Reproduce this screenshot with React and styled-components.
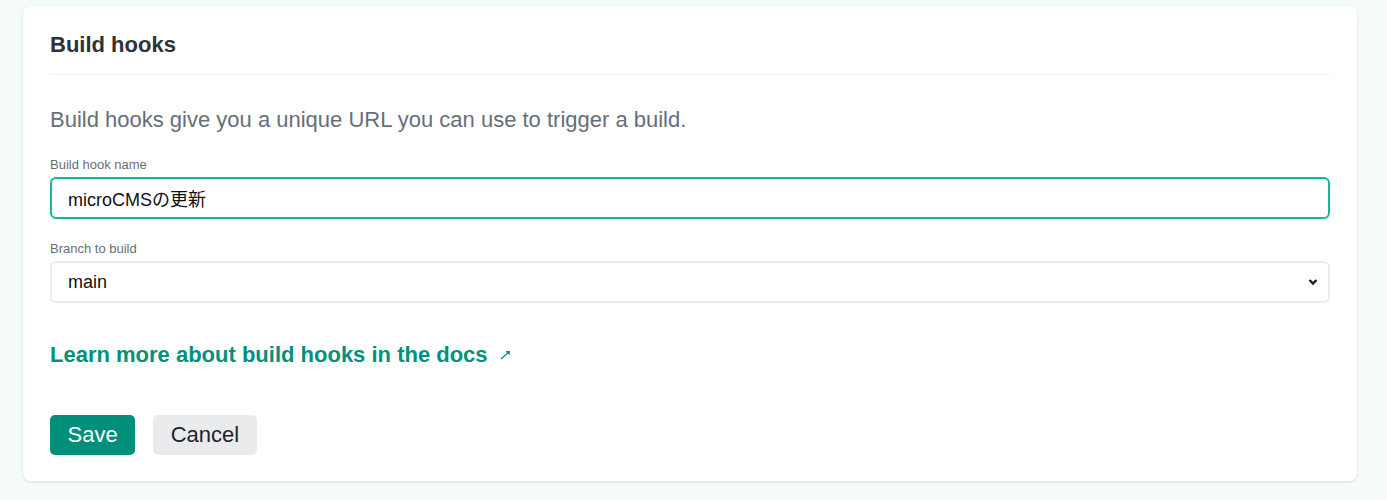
import React from "react";
import styled, { createGlobalStyle } from "styled-components";

const GlobalStyle = createGlobalStyle`
  body {
    margin: 0;
    background: #f4fbfa;
    font-family: "Liberation Sans", Arial, "Noto Sans CJK JP", sans-serif;
  }
`;

const Page = styled.div`
  padding: 6px 30px 19px 23px;
`;

const Card = styled.section`
  background: #fff;
  border-radius: 8px;
  box-shadow: 0 1px 3px rgba(0, 0, 0, 0.12);
  padding: 25px 27px 26px;
`;

const Title = styled.h2`
  margin: 0;
  font-size: 22px;
  line-height: 28px;
  font-weight: 700;
  color: #2d3339;
  padding-bottom: 15px;
  border-bottom: 1px solid #f1f3f4;
`;

const Lead = styled.p`
  margin: 31px 0 23px;
  font-size: 22px;
  line-height: 28px;
  color: #656f78;
`;

const Field = styled.div`
  margin-bottom: 22px;
`;

const Label = styled.label`
  display: block;
  font-size: 13px;
  line-height: 16px;
  color: #666f77;
  margin-bottom: 4px;
`;

const TextInput = styled.input`
  box-sizing: border-box;
  width: 100%;
  height: 42px;
  padding: 0 16px;
  font-family: inherit;
  font-size: 18px;
  color: #111;
  border: 2px solid ${(p) => (p.$focused ? "#17b59c" : "#ebeced")};
  border-radius: 6px;
  outline: none;
  background: #fff;
`;

const SelectWrap = styled.div`
  position: relative;
`;

const Select = styled.select`
  box-sizing: border-box;
  width: 100%;
  height: 42px;
  padding: 0 16px;
  font-family: inherit;
  font-size: 18px;
  color: #111;
  border: 2px solid #ebeced;
  border-radius: 6px;
  background: #fff;
  appearance: none;
  outline: none;
`;

const Chevron = styled.svg`
  position: absolute;
  right: 12px;
  top: 17px;
  pointer-events: none;
`;

const DocsLink = styled.a`
  display: inline-flex;
  align-items: center;
  gap: 12px;
  margin-top: 16px;
  font-size: 22px;
  line-height: 28px;
  font-weight: 700;
  color: #00917c;
  text-decoration: none;
`;

const Actions = styled.div`
  display: flex;
  gap: 18px;
  margin-top: 46px;
`;

const Button = styled.button`
  height: 40px;
  padding: 0 17.5px;
  border: none;
  border-radius: 5px;
  font-family: inherit;
  font-size: 22px;
  background: ${(p) => (p.$primary ? "#008f7a" : "#e9ebed")};
  color: ${(p) => (p.$primary ? "#fff" : "#1e2329")};
  cursor: pointer;
`;

export default function App() {
  return (
    <Page>
      <GlobalStyle />
      <Card>
        <Title>Build hooks</Title>
        <Lead>Build hooks give you a unique URL you can use to trigger a build.</Lead>
        <Field>
          <Label htmlFor="hook-name">Build hook name</Label>
          <TextInput id="hook-name" $focused defaultValue="microCMSの更新" />
        </Field>
        <Field>
          <Label htmlFor="branch">Branch to build</Label>
          <SelectWrap>
            <Select id="branch" defaultValue="main">
              <option value="main">main</option>
            </Select>
            <Chevron width="10" height="8" viewBox="0 0 10 8">
              <path d="M1.5 2 L5 5.5 L8.5 2" fill="none" stroke="#1c2128" strokeWidth="2.4" />
            </Chevron>
          </SelectWrap>
        </Field>
        <DocsLink href="#">
          Learn more about build hooks in the docs
          <svg width="11" height="10" viewBox="0 0 11 10">
            <path d="M1 9 L9.5 1.5" stroke="#00917c" strokeWidth="1.2" fill="none" />
            <path d="M5.5 1.2 L10 1 L9.6 5.3 Z" fill="#00917c" />
          </svg>
        </DocsLink>
        <Actions>
          <Button $primary>Save</Button>
          <Button>Cancel</Button>
        </Actions>
      </Card>
    </Page>
  );
}
